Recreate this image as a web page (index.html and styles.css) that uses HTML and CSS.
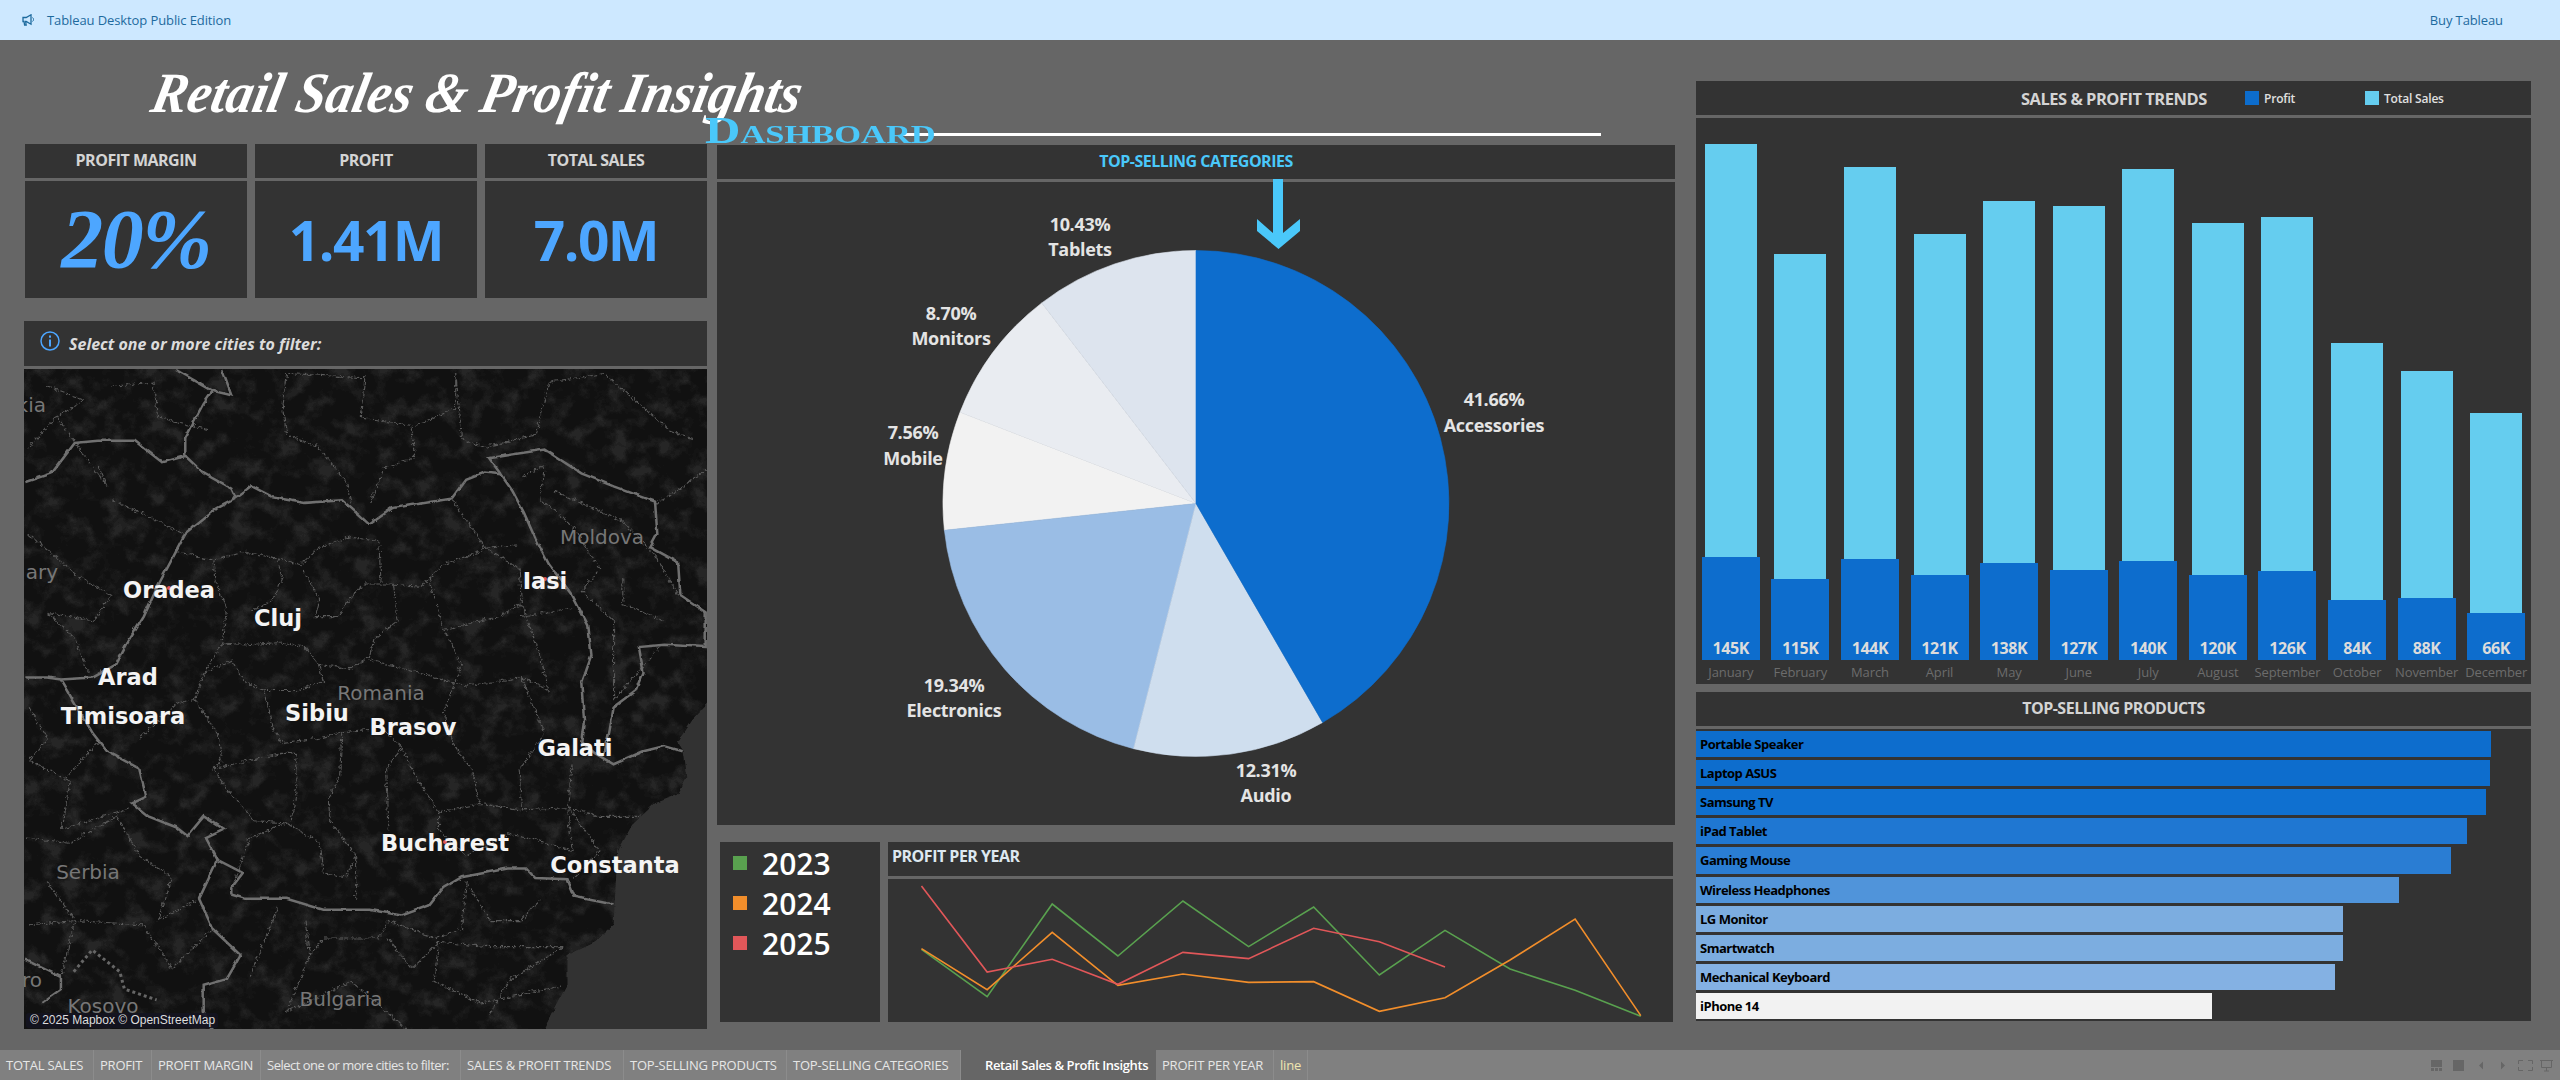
FILE: index.html
```html
<!DOCTYPE html>
<html lang="en">
<head>
<meta charset="utf-8">
<title>Retail Sales &amp; Profit Insights</title>
<link rel="stylesheet" href="styles.css">
</head>
<body>
<header class="topbar">
  <div class="topbar-left">
    <svg class="megaphone" viewBox="0 0 12 12"><path d="M1 3.5h3.2L9 .8v9.4L4.2 7.500H3.600l.6 3.500H2.600L2 7.500H1z" fill="none" stroke="#1d6a9e" stroke-width="1.300"/><path d="M10.500 3.500a2.500 2.500 0 0 1 0 4" fill="none" stroke="#1d6a9e" stroke-width="1"/></svg>
    <span>Tableau Desktop Public Edition</span>
  </div>
  <span class="buy">Buy Tableau</span>
</header>

<main class="dash">
  <h1 class="title">Retail Sales &amp; Profit Insights</h1>
  <div class="rule"></div>
  <div class="subtitle">Dashboard</div>
  <svg class="arrow" viewBox="0 0 43 70"><polygon points="16,0 26,0 26,54 43,40 43,52 21.500,70 0,52 0,40 16,54"/></svg>

  <section class="col-left">
    <div class="kpis">
      <div class="kpi"><div class="panel head">PROFIT MARGIN</div><div class="panel kpi-value script">20%</div></div>
      <div class="kpi"><div class="panel head">PROFIT</div><div class="panel kpi-value">1.41M</div></div>
      <div class="kpi"><div class="panel head">TOTAL SALES</div><div class="panel kpi-value">7.0M</div></div>
    </div>
    <div class="panel filter">
      <svg class="info" viewBox="0 0 20 20"><circle cx="10" cy="10" r="9" fill="none" stroke="#4da6ff" stroke-width="1.500"/><rect x="9" y="8.500" width="2" height="7" fill="#4da6ff"/><rect x="9" y="4.500" width="2" height="2.200" fill="#4da6ff"/></svg>
      <span>Select one or more cities to filter:</span>
    </div>
    <div class="map">
      <svg class="map-geo" viewBox="52 22 1483 1520" preserveAspectRatio="none">
        <defs>
          <filter id="mottle" filterUnits="userSpaceOnUse" x="52" y="22" width="1483" height="1520">
            <feTurbulence type="fractalNoise" baseFrequency="0.022" numOctaves="4" seed="7"/>
            <feColorMatrix values="0 0 0 0 1  0 0 0 0 1  0 0 0 0 1  2.400 0 0 0 -0.880"/>
            <feComponentTransfer><feFuncA type="discrete" tableValues="0 0 0.015 0.030 0.050 0.070 0.090"/></feComponentTransfer>
          </filter>
          <filter id="wobble" filterUnits="userSpaceOnUse" x="0" y="0" width="1600" height="1600">
            <feTurbulence type="turbulence" baseFrequency="0.07" numOctaves="2" seed="3"/>
            <feDisplacementMap in="SourceGraphic" scale="11" xChannelSelector="R" yChannelSelector="G"/>
          </filter>
          <filter id="wobble2" filterUnits="userSpaceOnUse" x="0" y="0" width="1600" height="1600">
            <feTurbulence type="turbulence" baseFrequency="0.04" numOctaves="2" seed="5"/>
            <feDisplacementMap in="SourceGraphic" scale="7" xChannelSelector="R" yChannelSelector="G"/>
          </filter>
        </defs>
        <rect class="land" x="52" y="22" width="1483" height="1520"/>
        <rect class="blotch" x="52" y="22" width="1483" height="1520" filter="url(#mottle)"/>
        <path class="sea" filter="url(#wobble2)" d="M1535 790L1500 830 1470 880 1482 900 1490 960 1470 1000 1420 1020 1370 1070 1340 1130 1335 1200 1330 1300 1290 1340 1230 1370 1230 1440 1200 1500 1180 1542H1560V790Z"/>
        <g class="county" filter="url(#wobble)">
          <path d="M380 440L460 460 520 440 600 455 650 470 690 430 760 405 820 415 825 510"/>
          <path d="M460 460L465 510 490 570 480 650 530 655 600 650 660 660 690 700 760 710 800 680 810 640 860 600 850 515 910 520 960 470 1040 440 1050 430 1120 425"/>
          <path d="M600 455L610 500 590 550 545 575"/>
          <path d="M655 480L690 550 680 590 730 590 770 530 790 515 850 515"/>
          <path d="M480 650L440 720 420 780 380 790 300 870"/>
          <path d="M690 700L700 740 640 760 570 760 590 850 610 880 690 870 740 855 800 850"/>
          <path d="M440 720L500 690 530 740 570 760"/>
          <path d="M420 780L470 860 480 920 460 940 610 905 640 905 640 1000 630 1060"/>
          <path d="M740 855L735 960 710 1010 715 1060 770 1140 770 1240"/>
          <path d="M830 850L870 890 835 940 840 1080"/>
          <path d="M870 890L900 960 950 1040 950 1080 1010 1140"/>
          <path d="M460 940L500 1000 550 1060 620 1065 540 1100 500 1215"/>
          <path d="M620 1065L690 1110 700 1180 750 1190 770 1140"/>
          <path d="M950 1040L1040 1020 1130 1035 1230 1030 1300 1050 1390 1050"/>
          <path d="M1040 1020L1020 940 980 880 960 810 1000 700 960 620 930 500"/>
          <path d="M960 620L1040 600 1080 590 1130 560 1125 480 1050 430 980 320"/>
          <path d="M1130 560L1170 680 1190 760 1130 730 1010 750 880 710 800 690"/>
          <path d="M1130 730L1180 860 1125 940 1130 1035"/>
          <path d="M1125 590L1240 570"/>
          <path d="M1230 1030L1240 930"/>
          <path d="M1010 1140L1100 1090 1180 1110 1240 1130 1230 1030"/>
          <path d="M600 1260L570 1340 540 1420"/>
          <path d="M660 1290L670 1370 700 1330 820 1330 840 1290 940 1330 1000 1310 1010 1200"/>
          <path d="M1010 1200L1060 1290 1130 1290 1170 1240"/>
          <path d="M840 1330L890 1400 950 1340 1060 1350 1220 1350 1100 1430 1060 1510"/>
          <path d="M670 1370L620 1500 760 1430 880 1540"/>
          <path d="M950 1340L940 1430 1040 1480 1220 1440"/>
          <path d="M120 130L230 290 210 240"/>
          <path d="M60 400L170 500 240 540 200 600 100 580 160 640 190 720"/>
          <path d="M240 320L320 360 400 400"/>
          <path d="M60 800L100 870 60 920 150 970 130 1080 280 1030"/>
          <path d="M210 880L140 960"/>
          <path d="M52 1100L150 1110 250 1050 300 1140 370 1190 340 1290 430 1240"/>
          <path d="M100 1200L160 1290 310 1300 370 1400 460 1310"/>
          <path d="M60 1300L160 1290 130 1420"/>
          <path d="M610 100L620 30 790 40 780 130 890 150 900 220 830 250 800 330"/>
          <path d="M610 100L620 170 690 200 750 280 760 330"/>
          <path d="M900 150L985 110 985 30 1000 180 1050 200 1160 170 1190 50 1310 30 1450 160 1500 180"/>
          <path d="M1130 270L1180 240 1170 320 1240 380 1300 480 1260 530 1330 600 1330 780 1430 660"/>
          <path d="M1200 300L1350 370 1420 450 1470 540"/>
          <path d="M1350 500L1350 560 1440 600"/>
          <path d="M1420 330L1480 290 1530 250"/>
          <path d="M100 60L180 90 120 130 60 200"/>
          <path d="M240 60L330 50 340 130 450 160"/>
          <path d="M1230 1030L1300 1130 1240 1195"/>
        </g>
        <g class="border" filter="url(#wobble2)">
          <path d="M800 378L850 340 980 318 1010 275 1050 258 1085 262 1110 300 1135 350 1160 410 1190 470 1240 540 1275 610 1282 680 1262 740 1268 830 1262 880 1290 905 1330 930 1395 900 1440 888 1480 900"/>
          <path d="M500 1230L530 1240 620 1240 700 1265 800 1265 870 1278 930 1255 960 1215 1000 1190 1100 1170 1140 1170 1160 1192 1230 1195 1245 1235 1330 1253"/>
          <path d="M800 378L760 340 740 322 660 328 590 315 545 290 510 318 470 340 400 400 375 450 340 520 310 590 275 650 250 700 200 730 130 735 100 730 55 730"/>
          <path d="M130 735L160 790 200 860 230 900 300 940 315 1005 285 1020 320 1050 380 1075 405 1095 440 1050 485 1080 445 1100 470 1150 525 1180 500 1215 500 1230"/>
          <path d="M470 1150L430 1240 460 1310 520 1370 490 1425 440 1440 440 1500 460 1542"/>
          <path d="M55 280L110 260 160 190 210 185 290 185 350 235 400 220 440 260 500 295 510 318"/>
          <path d="M400 220L400 180 440 100 460 70 500 80 480 22"/>
          <path d="M380 22L460 70"/>
          <path d="M1085 262L1060 225 1180 205 1260 260 1330 290 1420 325 1425 400 1410 430 1470 465 1475 540 1530 580 1530 660 1440 655 1385 660 1395 720 1380 760 1330 800 1320 860 1310 905"/>
          <path d="M52 1380L130 1420 130 1450 90 1480"/>
        </g>
        <path class="kosovo" d="M160 1410L200 1360 260 1410 270 1450 340 1475"/>
      </svg>
      <svg class="map-labels" viewBox="24 369 681 660">
        <text class="country end" x="45" y="412">kia</text>
        <text class="country end" x="57" y="579">ary</text>
        <text class="country end" x="41" y="987">ro</text>
        <text class="country" x="601" y="544">Moldova</text>
        <text class="country" x="380" y="700">Romania</text>
        <text class="country" x="87" y="879">Serbia</text>
        <text class="country" x="340" y="1006">Bulgaria</text>
        <text class="country" x="102" y="1013">Kosovo</text>
        <circle class="dot-red" cx="168" cy="588" r="2"/>
        <circle class="dot-red" cx="544" cy="579" r="2"/>
        <circle class="dot-red" cx="444" cy="842" r="2"/>
        <text class="city" x="168" y="598">Oradea</text>
        <text class="city" x="277" y="626">Cluj</text>
        <text class="city" x="544" y="589">Iasi</text>
        <text class="city" x="127" y="685">Arad</text>
        <text class="city" x="122" y="724">Timisoara</text>
        <text class="city" x="316" y="721">Sibiu</text>
        <text class="city" x="412" y="735">Brasov</text>
        <text class="city" x="574" y="756">Galati</text>
        <text class="city" x="444" y="851">Bucharest</text>
        <text class="city" x="614" y="873">Constanta</text>
      </svg>
      <div class="attribution">© 2025 Mapbox © OpenStreetMap</div>
    </div>
  </section>

  <section class="col-mid">
    <div class="panel head head-accent">TOP-SELLING CATEGORIES</div>
    <div class="panel pie-panel">
      <svg class="pie" viewBox="717 182 958 643">
        <path fill="#f2f2f2" stroke="#f2f2f2" stroke-width=".6" d="M1196 503.500L944.400 530.300A253 253 0 0 1 960 412.300Z"/>
        <path fill="#e9ecf1" stroke="#e9ecf1" stroke-width=".6" d="M1196 503.500L960 412.300A253 253 0 0 1 1041.800 302.900Z"/>
        <path fill="#dde4ee" stroke="#dde4ee" stroke-width=".6" d="M1196 503.500L1041.800 302.900A253 253 0 0 1 1196 250.500Z"/>
        <path fill="#9abde5" stroke="#9abde5" stroke-width=".6" d="M1196 503.500L1133.600 748.700A253 253 0 0 1 944.400 530.300Z"/>
        <path fill="#cfdeee" stroke="#cfdeee" stroke-width=".6" d="M1196 503.500L1322.600 722.500A253 253 0 0 1 1133.600 748.700Z"/>
        <path fill="#0d6dcd" stroke="#0d6dcd" stroke-width=".6" d="M1196 503.500V250.500A253 253 0 0 1 1322.600 722.500Z"/>
        <text class="pie-label" x="1080" y="231">10.43%</text><text class="pie-label" x="1080" y="256">Tablets</text>
        <text class="pie-label" x="951" y="320">8.70%</text><text class="pie-label" x="951" y="345">Monitors</text>
        <text class="pie-label" x="913" y="439">7.56%</text><text class="pie-label" x="913" y="465">Mobile</text>
        <text class="pie-label" x="954" y="692">19.34%</text><text class="pie-label" x="954" y="717">Electronics</text>
        <text class="pie-label" x="1266" y="777">12.31%</text><text class="pie-label" x="1266" y="802">Audio</text>
        <text class="pie-label" x="1494" y="406">41.66%</text><text class="pie-label" x="1494" y="432">Accessories</text>
      </svg>
    </div>
    <div class="mid-bottom">
      <div class="panel years">
        <div class="year"><i class="swatch green"></i>2023</div>
        <div class="year"><i class="swatch orange"></i>2024</div>
        <div class="year"><i class="swatch red"></i>2025</div>
      </div>
      <div class="linewrap">
        <div class="panel head head-left">PROFIT PER YEAR</div>
        <div class="panel line-panel">
          <svg class="lines" viewBox="298 177 1243 429" preserveAspectRatio="none">
            <polyline class="l green-l" points="351,388 455,530 558,252 662,408 765,243 869,380 972,261 1076,465 1180,331 1283,447 1386,511 1490,589"/>
            <polyline class="l orange-l" points="351,386 455,509 558,337 662,496 765,462 869,487 972,485 1076,574 1180,533 1283,420 1386,297 1490,587"/>
            <polyline class="l red-l" points="351,198 455,456 558,418 662,493 765,397 869,416 972,325 1076,365 1180,441"/>
          </svg>
        </div>
      </div>
    </div>
  </section>

  <section class="col-right">
    <div class="panel trend-head">
      <span class="trend-title">SALES &amp; PROFIT TRENDS</span>
      <i class="legend-sw sw-profit"></i><span class="legend-txt lt-profit">Profit</span>
      <i class="legend-sw sw-sales"></i><span class="legend-txt">Total Sales</span>
    </div>
    <div class="panel trend-body">
      <div class="tcol"><div class="plot"><div class="b-sales" style="height:516px"></div><div class="b-profit" style="height:103px">145K</div></div><div class="month">January</div></div>
      <div class="tcol"><div class="plot"><div class="b-sales" style="height:406px"></div><div class="b-profit" style="height:81px">115K</div></div><div class="month">February</div></div>
      <div class="tcol"><div class="plot"><div class="b-sales" style="height:493px"></div><div class="b-profit" style="height:101px">144K</div></div><div class="month">March</div></div>
      <div class="tcol"><div class="plot"><div class="b-sales" style="height:426px"></div><div class="b-profit" style="height:85px">121K</div></div><div class="month">April</div></div>
      <div class="tcol"><div class="plot"><div class="b-sales" style="height:459px"></div><div class="b-profit" style="height:97px">138K</div></div><div class="month">May</div></div>
      <div class="tcol"><div class="plot"><div class="b-sales" style="height:454px"></div><div class="b-profit" style="height:90px">127K</div></div><div class="month">June</div></div>
      <div class="tcol"><div class="plot"><div class="b-sales" style="height:491px"></div><div class="b-profit" style="height:99px">140K</div></div><div class="month">July</div></div>
      <div class="tcol"><div class="plot"><div class="b-sales" style="height:437px"></div><div class="b-profit" style="height:85px">120K</div></div><div class="month">August</div></div>
      <div class="tcol"><div class="plot"><div class="b-sales" style="height:443px"></div><div class="b-profit" style="height:89px">126K</div></div><div class="month">September</div></div>
      <div class="tcol"><div class="plot"><div class="b-sales" style="height:317px"></div><div class="b-profit" style="height:60px">84K</div></div><div class="month">October</div></div>
      <div class="tcol"><div class="plot"><div class="b-sales" style="height:289px"></div><div class="b-profit" style="height:62px">88K</div></div><div class="month">November</div></div>
      <div class="tcol"><div class="plot"><div class="b-sales" style="height:247px"></div><div class="b-profit" style="height:47px">66K</div></div><div class="month">December</div></div>
    </div>
    <div class="panel head head-products">TOP-SELLING PRODUCTS</div>
    <div class="panel products">
      <div class="prod" style="width:795px;background:#0d6dcd">Portable Speaker</div>
      <div class="prod" style="width:794px;background:#0d6dcd">Laptop ASUS</div>
      <div class="prod" style="width:790px;background:#0f70d0">Samsung TV</div>
      <div class="prod" style="width:771px;background:#1f77d2">iPad Tablet</div>
      <div class="prod" style="width:755px;background:#2a7dd3">Gaming Mouse</div>
      <div class="prod" style="width:703px;background:#5094da">Wireless Headphones</div>
      <div class="prod" style="width:647px;background:#7cade0">LG Monitor</div>
      <div class="prod" style="width:647px;background:#7cade0">Smartwatch</div>
      <div class="prod" style="width:639px;background:#84b1e3">Mechanical Keyboard</div>
      <div class="prod" style="width:516px;background:#f2f2f2">iPhone 14</div>
    </div>
  </section>
</main>

<footer class="tabs">
  <span class="tab">TOTAL SALES</span>
  <span class="tab">PROFIT</span>
  <span class="tab">PROFIT MARGIN</span>
  <span class="tab tab-sel">Select one or more cities to filter:</span>
  <span class="tab">SALES &amp; PROFIT TRENDS</span>
  <span class="tab">TOP-SELLING PRODUCTS</span>
  <span class="tab">TOP-SELLING CATEGORIES</span>
  <span class="tab active">Retail Sales &amp; Profit Insights</span>
  <span class="tab">PROFIT PER YEAR</span>
  <span class="tab tab-line">line</span>
  <div class="controls">
    <svg class="ctl" viewBox="0 0 122 11">
      <rect x="0" y="0" width="11" height="7"/><rect x="0" y="8" width="3" height="3"/><rect x="4" y="8" width="3" height="3"/><rect x="8" y="8" width="3" height="3"/>
      <rect x="22" y="0" width="11" height="11"/>
      <polygon points="52,1.500 52,9.500 48,5.500"/>
      <polygon points="70,1.500 70,9.500 74,5.500"/>
      <path class="ctl-line" d="M87.500 4V.5H92M97 .5h4.500V4M101.500 7v3.500H97M92 10.500h-4.500V7"/>
      <path class="ctl-line" d="M109 .5h13M110.500 .5v7h10v-7M115.500 7.500v3.500M113 11h5"/>
    </svg>
  </div>
</footer>
</body>
</html>
```
FILE: styles.css
```css
* { box-sizing: border-box; }
html, body { margin: 0; padding: 0; }
body {
  width: 2560px;
  height: 1080px;
  overflow: hidden;
  display: flex;
  flex-direction: column;
  background: #666;
  font-family: "Open Sans", "Liberation Sans", sans-serif;
}

/* top bar */
.topbar {
  height: 40px;
  flex: none;
  background: #cde8ff;
  color: #1d6a9e;
  font-size: 13px;
  letter-spacing: -0.1px;
  display: flex;
  align-items: center;
  justify-content: space-between;
  padding: 0 57px 0 22px;
}
.topbar-left { display: flex; align-items: center; gap: 13px; }
.megaphone { width: 12px; height: 12px; }

/* dashboard */
.dash {
  position: relative;
  flex: 1;
  min-height: 0;
  display: flex;
  padding: 41px 29px 0 24px;
  color: #d6d6d6;
}
.panel { background: #333; }
.head {
  height: 34px;
  flex: none;
  display: flex;
  align-items: center;
  justify-content: center;
  padding-bottom: 2px;
  font-weight: 700;
  font-size: 16px;
  letter-spacing: -0.5px;
  color: #d4d4d4;
}
.title {
  position: absolute;
  left: 146px;
  top: 20px;
  margin: 0;
  color: #fff;
  font: italic 700 57px "Liberation Serif", serif;
  white-space: nowrap;
  transform-origin: left bottom;
  transform: skewX(-12deg) scaleX(0.94);
}
.rule {
  position: absolute;
  left: 903px;
  top: 93px;
  width: 698px;
  height: 3px;
  background: #fff;
}
.subtitle {
  position: absolute;
  left: 705px;
  top: 71px;
  color: #4ac8fa;
  font: 700 37px/40px "Liberation Serif", serif;
  font-variant: small-caps;
  white-space: nowrap;
  transform-origin: left top;
  transform: scaleX(1.325);
}
.arrow {
  position: absolute;
  left: 1257px;
  top: 139px;
  width: 43px;
  height: 70px;
  fill: #4ac8fa;
}

/* left column */
.col-left { width: 683px; flex: none; padding-top: 63px; display: flex; flex-direction: column; }
.kpis { display: flex; gap: 8px; padding-left: 1px; }
.kpi { width: 222px; display: flex; flex-direction: column; gap: 3px; }
.kpi-value {
  height: 117px;
  display: flex;
  align-items: center;
  justify-content: center;
  color: #4da6ff;
  font-size: 55px;
  font-weight: 700;
  letter-spacing: -1.500px;
}
.kpi-value.script {
  font: italic 700 84px "Liberation Serif", serif;
}
.filter {
  margin-top: 23px;
  height: 45px;
  display: flex;
  align-items: center;
  gap: 9px;
  padding-left: 16px;
  font-style: italic;
  font-weight: 700;
  font-size: 16px;
  color: #dcdcdc;
}
.info { width: 20px; height: 20px; margin-top: -6px; }
.map { position: relative; margin-top: 3px; height: 660px; overflow: hidden; }
.map-geo, .map-labels { position: absolute; left: 0; top: 0; width: 100%; height: 100%; display: block; }
.land { fill: #111; }
.blotch { fill: #fff; }
.sea { fill: #333; }
.county path { fill: none; stroke: #5a5a5a; stroke-width: 1.100px; stroke-dasharray: 5 1.500; vector-effect: non-scaling-stroke; }
.border path { fill: none; stroke: #6f6f6f; stroke-width: 2.500px; vector-effect: non-scaling-stroke; }
.kosovo { fill: none; stroke: #666; stroke-width: 3px; stroke-dasharray: 3 3; vector-effect: non-scaling-stroke; }
.city {
  font: 700 22.500px "DejaVu Sans", sans-serif;
  fill: #f4f4f4;
  text-anchor: middle;
}
.country {
  font: 400 20px "DejaVu Sans", sans-serif;
  fill: #777;
  text-anchor: middle;
}
.country.end { text-anchor: end; }
.dot-red { fill: #e15759; }
.attribution {
  position: absolute;
  left: 2px;
  bottom: 1px;
  padding: 0 3px 0 4px;
  height: 15px;
  border-radius: 3px;
  background: rgba(20, 20, 32, 0.9);
  color: #ddd;
  font: 12px/15px "Liberation Sans", sans-serif;
  white-space: nowrap;
}

/* middle column */
.col-mid { width: 958px; flex: none; margin-left: 10px; padding-top: 64px; display: flex; flex-direction: column; }
.head-accent { color: #4ac8fa; }
.pie-panel { margin-top: 3px; height: 643px; flex: none; }
.pie { width: 100%; height: 100%; display: block; }
.pie-label {
  font: 700 18px "Open Sans", sans-serif;
  letter-spacing: -0.3px;
  fill: #e4e4e4;
  text-anchor: middle;
}
.mid-bottom { display: flex; margin-top: 17px; padding-left: 3px; gap: 8px; height: 180px; flex: none; }
.years { width: 160px; padding: 1px 0 0 13px; display: flex; flex-direction: column; }
.year {
  height: 40px;
  display: flex;
  align-items: center;
  gap: 15px;
  color: #fff;
  font-size: 30px;
  font-weight: 600;
}
.swatch { width: 14px; height: 14px; flex: none; }
.green { background: #59a14f; }
.orange { background: #f28e2b; }
.red { background: #e15759; }
.linewrap { width: 785px; height: 180px; display: flex; flex-direction: column; gap: 3px; }
.head-left { justify-content: flex-start; padding: 0 0 6px 4px; color: #dde8f0; }
.line-panel { height: 143px; flex: none; }
.lines { width: 100%; height: 143px; display: block; }
.l { fill: none; stroke-width: 1.600px; vector-effect: non-scaling-stroke; }
.green-l { stroke: #59a14f; }
.orange-l { stroke: #f28e2b; }
.red-l { stroke: #e15759; }

/* right column */
.col-right { width: 835px; flex: none; margin-left: 21px; display: flex; flex-direction: column; }
.trend-head { height: 34px; flex: none; display: flex; align-items: center; padding-left: 325px; }
.trend-title { width: 224px; font-weight: 700; font-size: 16.500px; letter-spacing: -0.5px; color: #d4d4d4; }
.legend-sw { width: 14px; height: 14px; flex: none; margin-right: 5px; }
.sw-profit { background: #0d6dcd; }
.sw-sales { background: #65cdef; }
.legend-txt { font-size: 12px; font-weight: 600; letter-spacing: -0.2px; color: #e0e0e0; }
.lt-profit { width: 101px; }
.trend-body { margin-top: 3px; height: 566px; flex: none; display: grid; grid-template-columns: repeat(12, 1fr); }
.tcol { display: flex; flex-direction: column; min-width: 0; }
.plot { height: 542px; display: grid; justify-items: center; align-items: end; }
.b-sales, .b-profit { grid-area: 1 / 1; }
.b-sales { width: 52px; background: #65cdef; }
.b-profit {
  width: 58px;
  background: #0d6dcd;
  display: flex;
  align-items: flex-end;
  justify-content: center;
  padding-bottom: 1px;
  font-size: 16px;
  font-weight: 700;
  letter-spacing: -0.4px;
  color: #dcdcdc;
}
.month {
  height: 24px;
  display: flex;
  align-items: center;
  justify-content: center;
  font-size: 13px;
  letter-spacing: -0.1px;
  color: #6c6c6c;
  white-space: nowrap;
}
.head-products { margin-top: 8px; }
.products { margin-top: 3px; height: 292px; flex: none; padding: 2px 0; display: grid; grid-template-rows: repeat(10, 1fr); row-gap: 3px; }
.prod {
  display: flex;
  align-items: center;
  padding-left: 4px;
  color: #000;
  font-size: 13px;
  font-weight: 700;
  letter-spacing: -0.5px;
}

/* footer */
.tabs {
  height: 30px;
  flex: none;
  background: #808080;
  display: grid;
  grid-template-columns: 94px 58px 109px 200px 163px 163px 174px 195px 118px 34px 1fr;
  color: #e6e6e6;
  font-size: 13px;
  letter-spacing: -0.2px;
}
.tab {
  display: flex;
  align-items: center;
  padding-left: 6px;
  border-right: 1px solid #8c8c8c;
  white-space: nowrap;
  overflow: hidden;
}
.tab-sel { letter-spacing: -0.5px; }
.tab.active { background: #666; color: #fff; font-weight: 600; padding-left: 24px; border-right: 0; letter-spacing: -0.4px; }
.tab-line { color: #f0e6b0; }
.controls { display: flex; align-items: center; justify-content: flex-end; padding-right: 7px; }
.ctl { width: 122px; height: 11px; fill: #666; overflow: visible; }
.ctl-line { fill: none; stroke: #666; stroke-width: 1px; }
```
